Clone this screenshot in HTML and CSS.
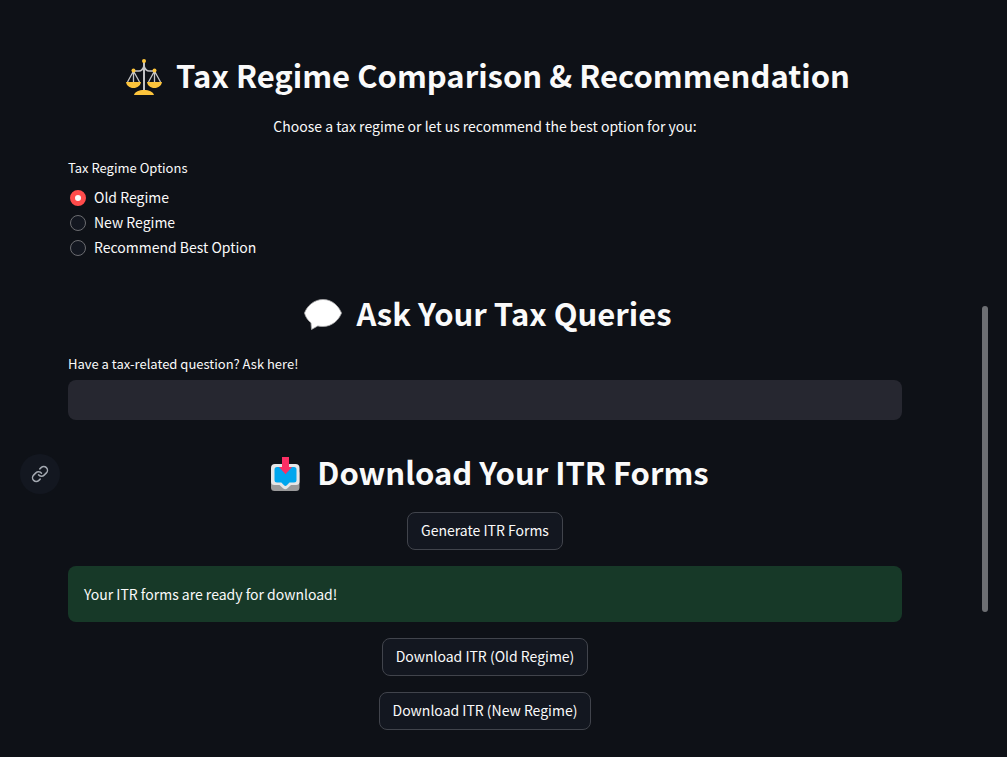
FILE: index.html
```
<!DOCTYPE html>
<html lang="en">
<head>
<meta charset="utf-8">
<meta name="viewport" content="width=device-width, initial-scale=1">
<title>Tax Regime Comparison</title>
<link rel="stylesheet" href="styles.css">
</head>
<body>
<div class="app">
  <main class="content">
    <h1 class="heading">
      <svg class="heading-icon" viewBox="0 0 36 36" aria-hidden="true">
        <g fill="none" stroke="#c4c4c6" stroke-width="1.3">
          <path d="M18 3v28" stroke-width="2"/>
          <path d="M18 7c-1 3-3 5-5 5H8M18 7c1 3 3 5 5 5h5" stroke-width="1.6"/>
          <path d="M7.500 12L1.500 23M7.500 12v11M7.500 12l6 11M28.500 12l-6 11M28.500 12v11M28.500 12l6 11"/>
        </g>
        <g fill="#fcc43c">
          <circle cx="18" cy="2" r="2"/><circle cx="7.500" cy="11.500" r="2"/><circle cx="28.500" cy="11.500" r="2"/>
          <path d="M0 23h15c-.5 3.500-3.500 6-7.500 6S.5 26.500 0 23zM21 23h15c-.5 3.500-3.500 6-7.500 6s-7-2.500-7.500-6zM8 36c1-3.500 5-5 10-5s9 1.500 10 5z"/>
        </g>
      </svg>
      <span class="heading-text">Tax Regime Comparison &amp; Recommendation</span>
    </h1>
    <p class="intro">Choose a tax regime or let us recommend the best option for you:</p>

    <fieldset class="options">
      <legend class="label">Tax Regime Options</legend>
      <label class="option"><input class="radio" type="radio" name="regime" checked>Old Regime</label>
      <label class="option"><input class="radio" type="radio" name="regime">New Regime</label>
      <label class="option"><input class="radio" type="radio" name="regime">Recommend Best Option</label>
    </fieldset>

    <h2 class="heading section">
      <svg class="heading-icon wide" viewBox="0 0 38 36" aria-hidden="true">
        <path d="M19 2.500c10 0 16 7.500 18.500 13.500C35 23 28 29.500 19 29.500c-1.800 0-3.600-.2-5.200-.6L7.500 32.500 7 25.800C4 23.600 1.500 20 .5 16 3 9 10 2.500 19 2.500z" fill="#fff" stroke="#a9a9ab" stroke-width=".8"/>
      </svg>
      <span class="heading-text">Ask Your Tax Queries</span>
    </h2>
    <label class="label query-label" for="query">Have a tax-related question? Ask here!</label>
    <input class="query" id="query" type="text">

    <h2 class="heading section">
      <a class="anchor" href="#download" aria-label="Link to this section">
        <svg viewBox="0 0 24 24" width="18" height="18" fill="none" stroke="#a3a8b0" stroke-width="2" stroke-linecap="round" stroke-linejoin="round" aria-hidden="true">
          <path d="M10 13a5 5 0 0 0 7.540.54l3-3a5 5 0 0 0-7.070-7.070l-1.720 1.710"/>
          <path d="M14 11a5 5 0 0 0-7.540-.54l-3 3a5 5 0 0 0 7.070 7.070l1.710-1.710"/>
        </svg>
      </a>
      <svg class="heading-icon" viewBox="0 0 36 36" aria-hidden="true">
        <rect x="4" y="14" width="28.500" height="21" rx="3.500" fill="#9a9a9b"/>
        <path d="M8 8h20.500a4 4 0 0 1 4 4v13.500a3.500 3.500 0 0 1-3.500 3.500h-5l-3.500 3.200a3.500 3.500 0 0 1-4.500 0L12.500 29h-5A3.500 3.500 0 0 1 4 25.500V12a4 4 0 0 1 4-4z" fill="#e6e6e7"/>
        <path d="M10 11h17a2.500 2.500 0 0 1 2.500 2.500V24a2.500 2.500 0 0 1-2.500 2.500h-4.500l-2.700 2.700a2 2 0 0 1-2.800 0l-2.700-2.700H10A2.500 2.500 0 0 1 7.500 24V13.500A2.500 2.500 0 0 1 10 11z" fill="#00a6ee"/>
        <path d="M15 1h7v10h3l-6.500 7.200L12 11h3z" fill="#fb2f64"/>
      </svg>
      <span class="heading-text" id="download">Download Your ITR Forms</span>
    </h2>
    <div class="actions">
      <button class="button" type="button">Generate ITR Forms</button>
      <div class="alert" role="status">Your ITR forms are ready for download!</div>
      <button class="button" type="button">Download ITR (Old Regime)</button>
      <button class="button" type="button">Download ITR (New Regime)</button>
    </div>
  </main>
  <div class="rail" aria-hidden="true"><div class="thumb"></div></div>
</div>
</body>
</html>
```
FILE: styles.css
```
* {
  box-sizing: border-box;
}

body {
  margin: 0;
  background: #0e1117;
  color: #fafafa;
  font-family: "Noto Sans CJK SC", "Open Sans", sans-serif;
  font-size: 14px;
  line-height: 24px;
}

.app {
  display: grid;
  grid-template-columns: 1fr 37px;
  min-height: 100vh;
}

.content {
  display: flex;
  flex-direction: column;
  padding: 55px 68px 26px;
}

.heading {
  position: relative;
  display: flex;
  align-items: center;
  justify-content: center;
  gap: 14px;
  margin: 0;
  padding-left: 6px;
  font-size: 31px;
  font-weight: 700;
  line-height: 40px;
  white-space: nowrap;
}

.heading-text {
  padding-bottom: 4px;
}

.section {
  margin-top: 32px;
}

.heading-icon {
  flex: none;
  width: 36px;
  height: 36px;
}

.heading-icon.wide {
  width: 38px;
}

.anchor {
  position: absolute;
  left: -48px;
  top: 2px;
  display: flex;
  align-items: center;
  justify-content: center;
  width: 40px;
  height: 40px;
  border-radius: 50%;
  background: #131720;
}

.intro {
  margin: 15px 0 0;
  text-align: center;
}

.options {
  margin: 20px 0 0;
  padding: 0 0 1px;
  border: 0;
}

.label {
  padding: 0;
  font-size: 13px;
  line-height: 20px;
}

.options .label {
  margin-bottom: 7px;
}

.option {
  display: flex;
  align-items: center;
  gap: 8px;
  width: fit-content;
  padding-left: 2px;
  line-height: 25px;
}

.radio {
  appearance: none;
  width: 16px;
  height: 16px;
  margin: 0;
  border: 1px solid #6b6c70;
  border-radius: 50%;
  background: #131720;
}

.radio:checked {
  border: 5px solid #ff4b4b;
  background: #fafafa;
}

.query-label {
  margin-top: 17px;
}

.query {
  width: 100%;
  height: 40px;
  margin-top: 6px;
  padding: 0 12px;
  border: 0;
  border-radius: 8px;
  background: #262730;
  color: inherit;
  font: inherit;
}

.actions {
  display: flex;
  flex-direction: column;
  align-items: center;
  gap: 16px;
  margin-top: 16px;
}

.button {
  padding: 5px 13px 7px;
  border: 1px solid #41444c;
  border-radius: 8px;
  background: #131720;
  color: inherit;
  font: inherit;
}

.alert {
  width: 100%;
  padding: 16px;
  border-radius: 8px;
  background: #173928;
}

.rail {
  padding: 306px 0 0 12px;
}

.thumb {
  width: 6px;
  height: 306px;
  border-radius: 3px;
  background: #6d6f73;
}
```
